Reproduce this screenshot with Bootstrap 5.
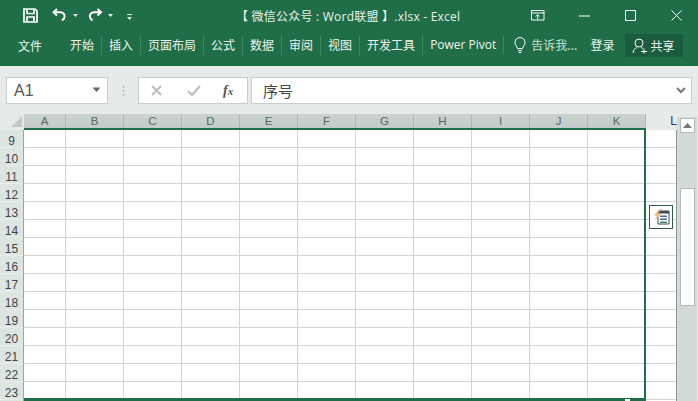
<!doctype html>
<html lang="zh"><head><meta charset="utf-8"><title>Excel</title>
<link rel="stylesheet" href="https://cdn.jsdelivr.net/npm/bootstrap@5.3.0/dist/css/bootstrap.min.css">
<style>
html,body{margin:0;height:401px;overflow:hidden;background:#e6eae8}
body{width:698px;font-family:"Noto Sans CJK SC","Liberation Sans",sans-serif;font-size:12px;color:#444}
.xl-top{height:66px;color:#fff;background:#1f6e47}
.xl-title{height:30px;position:relative}
.xl-qat{padding-left:23px;height:30px}
.xl-qat svg{display:block;flex:none}
.xl-name{position:absolute;left:236px;top:6px;font-family:"Open Sans","Noto Sans CJK SC",sans-serif;font-size:12px;letter-spacing:.23px;line-height:22px;color:#e9f2ed;white-space:nowrap}
.xl-win{position:absolute;left:0;top:0;width:100%;height:30px}
.xl-win svg{position:absolute;top:10px}
.xl-tabs{height:36px;padding-left:18px;color:#eef5f1;white-space:nowrap}
.xl-tab{display:block;height:20px;line-height:20px;margin-top:5px;border-left:1px solid #3f8660;padding:0 7px}
.xl-tab.xl-nosep{border-left:0;padding-left:0;margin-left:28px}
.xl-share{background:#1a5c3c;width:58px;height:23px;margin-left:10px;margin-top:4px;line-height:22px}
.xl-fbar{height:48px;padding:11px 6px 0 6px;background:#e6eae8}
.xl-box{background:#fff;border:1px solid #c9cecc;height:27px;line-height:25px}
.xl-namebox{width:102px;padding-left:7px;font-size:16px;font-family:"Liberation Sans",sans-serif;color:#555;position:relative}
.xl-dots{width:30px;height:27px}
.xl-btns{width:110px}
.xl-input{width:441px;margin-left:3px;padding-left:11px;font-size:15px;color:#444}
.xl-head{height:16px;background:#e6eae8}
.xl-corner{width:24px;height:15px;flex:none}
.xl-ch{width:58px;flex:none;height:15px;background:linear-gradient(#cbd2cf,#c3cbc8);border-right:1px solid #aeb8b3;text-align:center;line-height:15px;font-size:11.5px;font-family:"Liberation Sans",sans-serif;color:#566a60}
.xl-ch.xl-a{width:42px}
.xl-l{width:32px;text-align:right;padding-right:1px;line-height:15px;font-family:"Liberation Sans",sans-serif;font-size:12px;color:#3a2f5a;flex:none}
.xl-main{height:271px;position:relative}
.xl-rows{width:24px;flex:none;background:#dde5e1;border-right:1px solid #9aa6a0}
.xl-rn{height:18px;padding-top:2px;line-height:19px;text-align:center;font-family:"Liberation Sans",sans-serif;font-size:12px;color:#444;background:#dde5e1;border-bottom:1px solid #e9eeeb}
.xl-cells{width:653px;flex:none;border-right:1px solid #8f9794;height:271px;background-color:#fff;
 background-image:repeating-linear-gradient(90deg,transparent 0 57px,#d4d4d4 57px 58px),repeating-linear-gradient(180deg,transparent 0 17px,#d4d4d4 17px 18px);
 background-position:-16px 0,0 0}
.xl-sel{position:absolute;left:24px;top:-2px;width:622px;height:273px;border:2px solid #1f6e47;border-width:2px 2px 3px 0;pointer-events:none}
.xl-handle{position:absolute;left:625px;top:269px;width:5px;height:2px;background:#fff}
.xl-smart{position:absolute;left:649px;top:75px;width:24px;height:24px;background:#fff;border:1px solid #2f5c48;padding:2px}
.xl-sb{width:20px;flex:none;background:#d3dbd8;margin-top:-13px;padding:0 2px 0 3px;height:284px;position:relative}
.xl-up{height:15px;background:#fdfdfd;border:1px solid #b4bbb8;margin-top:1px}
.xl-thumb{background:#fff;border:1px solid #b4bbb8;height:118px;margin-top:55px}
</style></head><body>
<div class="xl-top">
 <div class="xl-title d-flex align-items-center">
  <div class="xl-qat d-flex align-items-center">
   <svg width="15" height="15" viewBox="0 0 15 15" fill="none" stroke="#fff" stroke-width="1.7"><path d="M1 1h11l2 2v11H1z"/><path d="M4 1.500v4h7v-4M4 13.500v-4.500h7v4.500"/></svg>
   <svg style="margin-left:14px" width="15" height="14" viewBox="0 0 15 14" fill="none" stroke="#fff" stroke-width="2"><path d="M5 1 1.600 4.300 5 7.600M2 4.300h6.500a4 4 0 0 1 3.500 6.200L10 12.500"/></svg>
   <svg style="margin-left:5px" width="7" height="5" viewBox="0 0 7 5"><path d="M1 1h5L3.500 4z" fill="#e6efe9"/></svg>
   <svg style="margin-left:8px" width="16" height="14" viewBox="0 0 16 14" fill="none" stroke="#fff" stroke-width="2"><path d="M10.500 1 14 4.300 10.500 7.600M13.500 4.300H7a4 4 0 0 0-3.500 6.200L5.500 12.500"/></svg>
   <svg style="margin-left:4px" width="7" height="5" viewBox="0 0 7 5"><path d="M1 1h5L3.500 4z" fill="#e6efe9"/></svg>
   <svg style="margin-left:12px;margin-top:3px" width="7" height="8" viewBox="0 0 7 8"><path d="M1 1.500h5" stroke="#dce9e2"/><path d="M1 4h5L3.500 7z" fill="#dce9e2"/></svg>
  </div>
  <div class="xl-name">【 微信公众号 : Word联盟 】.xlsx - Excel</div>
  <div class="xl-win">
   <svg style="left:531px" width="14" height="11" viewBox="0 0 14 11" fill="none" stroke="#fff"><path d="M.5.500h12.500v9.500H.5zM.5 3h12.500M6.700 9V5M4.800 6.500l1.900-1.900 1.900 1.900"/></svg>
   <svg style="left:579px;top:15px" width="11" height="2" viewBox="0 0 11 2"><path d="M0 1h11" stroke="#fff"/></svg>
   <svg style="left:625px" width="11" height="11" viewBox="0 0 11 11" fill="none" stroke="#fff"><path d="M.5.500h10v10H.5z"/></svg>
   <svg style="left:671px" width="11" height="11" viewBox="0 0 11 11" fill="none" stroke="#fff"><path d="M.5.500l10 10M10.500.500l-10 10"/></svg>
  </div>
 </div>
 <div class="xl-tabs d-flex">
  <span style="margin-top:6px;line-height:20px;width:24px">文件</span>
  <span class="xl-tab xl-nosep">开始</span>
  <span class="xl-tab">插入</span>
  <span class="xl-tab">页面布局</span>
  <span class="xl-tab">公式</span>
  <span class="xl-tab">数据</span>
  <span class="xl-tab">审阅</span>
  <span class="xl-tab">视图</span>
  <span class="xl-tab">开发工具</span>
  <span class="xl-tab" style="font-family:'Open Sans','Noto Sans',sans-serif">Power Pivot</span>
  <span class="xl-tab d-flex align-items-center" style="padding-left:10px;padding-right:0;color:#cfe0d7">
   <svg width="12" height="17" viewBox="0 0 12 17" fill="none" stroke="#fff"><path d="M3.500 11.500C3 9 1 8.500 1 5.500a5 5 0 0 1 10 0c0 3-2 3.500-2.500 6zM4 13.500h4M4.500 15.500h3"/></svg>
   <span style="margin-left:5px">告诉我...</span>
  </span>
  <span style="margin-top:5px;line-height:20px;margin-left:13px">登录</span>
  <span class="xl-share d-flex align-items-center" style="margin-left:11px">
   <svg style="margin-left:7px;flex:none" width="15" height="16" viewBox="0 0 15 16" fill="none" stroke="#fff"><circle cx="7" cy="5" r="4"/><path d="M1 15c.5-3 2-5 4-5.500M9 9.500c.8.200 1.500.600 2 1.100M9 13.500h6M12 10.500v5"/></svg>
   <span style="margin-left:3px">共享</span>
  </span>
 </div>
</div>
<div class="xl-fbar d-flex">
 <div class="xl-box xl-namebox">A1<svg style="position:absolute;right:6px;top:9px" width="9" height="6" viewBox="0 0 9 6"><path d="M.5.500h8L4.500 5z" fill="#666"/></svg></div>
 <div class="xl-dots d-flex align-items-center justify-content-center"><svg width="3" height="12" viewBox="0 0 3 12"><path d="M1.500 1v1.500M1.500 5v1.500M1.500 9v1.500" stroke="#aaa" stroke-width="1.500"/></svg></div>
 <div class="xl-box xl-btns d-flex align-items-center">
  <svg style="margin-left:12px" width="11" height="11" viewBox="0 0 11 11"><path d="M1 1l9 9M10 1l-9 9" stroke="#bcbcbc" stroke-width="2"/></svg>
  <svg style="margin-left:25px" width="14" height="11" viewBox="0 0 14 11" fill="none"><path d="M1 6l4 4 8-9" stroke="#bcbcbc" stroke-width="2"/></svg>
  <span style="margin-left:22px;font-family:'Liberation Serif',serif;font-style:italic;font-weight:700;font-size:14px;color:#555;line-height:24px">f<span style="font-size:11px">x</span></span>
 </div>
 <div class="xl-box xl-input position-relative">序号<svg style="position:absolute;right:5px;top:9px" width="10" height="7" viewBox="0 0 10 7" fill="none"><path d="M1 1l4 4 4-4" stroke="#777" stroke-width="2"/></svg></div>
</div>
<div class="xl-head d-flex">
 <div class="xl-corner position-relative"><svg style="position:absolute;left:11px;top:2px" width="11" height="11" viewBox="0 0 11 11"><path d="M11 0v11H0z" fill="#c3c9c6"/></svg></div>
 <div class="xl-ch xl-a">A</div><div class="xl-ch">B</div><div class="xl-ch">C</div><div class="xl-ch">D</div><div class="xl-ch">E</div><div class="xl-ch">F</div><div class="xl-ch">G</div><div class="xl-ch">H</div><div class="xl-ch">I</div><div class="xl-ch">J</div><div class="xl-ch">K</div>
 <div class="xl-l">L</div>
</div>
<div class="xl-main d-flex">
 <div class="xl-rows">
  <div class="xl-rn">9</div><div class="xl-rn">10</div><div class="xl-rn">11</div><div class="xl-rn">12</div><div class="xl-rn">13</div><div class="xl-rn">14</div><div class="xl-rn">15</div><div class="xl-rn">16</div><div class="xl-rn">17</div><div class="xl-rn">18</div><div class="xl-rn">19</div><div class="xl-rn">20</div><div class="xl-rn">21</div><div class="xl-rn">22</div><div class="xl-rn">23</div>
 </div>
 <div class="xl-cells"></div>
 <div class="xl-sb"><div class="xl-up d-flex align-items-center justify-content-center"><svg width="9" height="5" viewBox="0 0 9 5"><path d="M0 5h9L4.500 0z" fill="#777"/></svg></div><div class="xl-thumb"></div></div>
 <div class="xl-sel"></div><div class="xl-handle"></div>
 <div class="xl-smart"><svg class="d-block" width="18" height="18" viewBox="0 0 18 18"><path d="M6 3h11v13H6z" fill="#fff" stroke="#3d4a55"/><path d="M6 3h11v2.500H6z" fill="#3d4a55"/><path d="M8 7.500h7V9H8zM8 10.500h7V12H8z" fill="#4b6f9c"/><path d="M8 13.500h7V15H8z" fill="#3f8a66"/><path d="M8 1 2 7l3 1-3 5 7-7-3-1 4-4z" fill="#f0b878"/></svg></div>
</div>
</body></html>
